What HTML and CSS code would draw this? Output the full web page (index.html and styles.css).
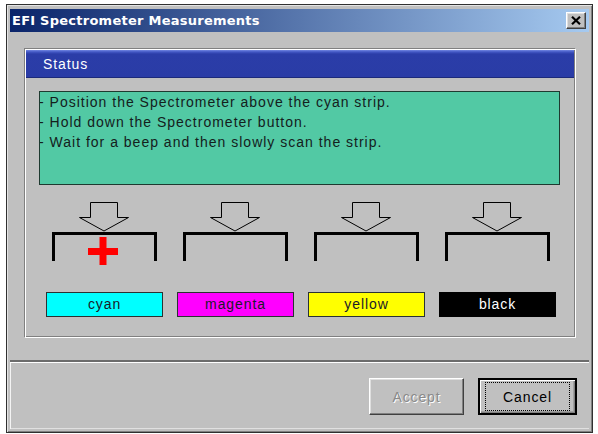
FILE: index.html
```html
<!doctype html>
<html lang="en">
  <head>
    <meta charset="utf-8">
    <title>EFI Spectrometer Measurements</title>
    <link rel="stylesheet" href="styles.css">
  </head>
  <body>
    <div class="window">
      <div class="titlebar">
        <span class="title">EFI Spectrometer Measurements</span>
        <button type="button" class="close-btn" aria-label="Close">
          <svg width="10" height="9" viewBox="0 0 10 9">
            <path d="M1 0.8 L9 8.2 M9 0.8 L1 8.2" stroke="#000" stroke-width="2.2" fill="none"/>
          </svg>
        </button>
      </div>

      <div class="client">
        <div class="panel">
          <div class="panel-head">Status</div>

          <div class="status-box">
            <div class="status-text">
              <div>- Position the Spectrometer above the cyan strip.</div>
              <div>- Hold down the Spectrometer button.</div>
              <div>- Wait for a beep and then slowly scan the strip.</div>
            </div>
          </div>

          <div class="strips">
            <div class="strip">
              <svg class="target" width="131" height="64" viewBox="0 0 131 64">
                <polygon points="51.5,0.5 78.5,0.5 78.5,15.5 89.5,15.5 65,29 40.5,15.5 51.5,15.5" fill="none" stroke="#000" stroke-width="1"/>
                <polyline points="14.5,59 14.5,31.5 116.5,31.5 116.5,59" fill="none" stroke="#000" stroke-width="3" stroke-linejoin="miter"/>
                <rect x="49" y="46" width="30" height="7" fill="#f00"/>
                <rect x="60.5" y="35" width="7" height="28" fill="#f00"/>
              </svg>
              <div class="swatch swatch-cyan">cyan</div>
            </div>
            <div class="strip">
              <svg class="target" width="131" height="64" viewBox="0 0 131 64">
                <polygon points="51.5,0.5 78.5,0.5 78.5,15.5 89.5,15.5 65,29 40.5,15.5 51.5,15.5" fill="none" stroke="#000" stroke-width="1"/>
                <polyline points="14.5,59 14.5,31.5 116.5,31.5 116.5,59" fill="none" stroke="#000" stroke-width="3" stroke-linejoin="miter"/>
              </svg>
              <div class="swatch swatch-magenta">magenta</div>
            </div>
            <div class="strip">
              <svg class="target" width="131" height="64" viewBox="0 0 131 64">
                <polygon points="51.5,0.5 78.5,0.5 78.5,15.5 89.5,15.5 65,29 40.5,15.5 51.5,15.5" fill="none" stroke="#000" stroke-width="1"/>
                <polyline points="14.5,59 14.5,31.5 116.5,31.5 116.5,59" fill="none" stroke="#000" stroke-width="3" stroke-linejoin="miter"/>
              </svg>
              <div class="swatch swatch-yellow">yellow</div>
            </div>
            <div class="strip">
              <svg class="target" width="131" height="64" viewBox="0 0 131 64">
                <polygon points="51.5,0.5 78.5,0.5 78.5,15.5 89.5,15.5 65,29 40.5,15.5 51.5,15.5" fill="none" stroke="#000" stroke-width="1"/>
                <polyline points="14.5,59 14.5,31.5 116.5,31.5 116.5,59" fill="none" stroke="#000" stroke-width="3" stroke-linejoin="miter"/>
              </svg>
              <div class="swatch swatch-black">black</div>
            </div>
          </div>
        </div>

        <div class="separator"></div>

        <div class="button-bar">
          <button type="button" class="btn" disabled>Accept</button>
          <button type="button" class="btn btn-default"><span class="focus">Cancel</span></button>
        </div>
      </div>
    </div>
  </body>
</html>
```

FILE: styles.css
```css
body {
     margin: 0;
     background-color: #fff;
     font-family: "Liberation Sans", Arial, sans-serif;
}
.window {
     box-sizing: border-box;
     width: 587px;
     height: 429px;
     margin: 4px 0 0 6px;
     padding: 4px 3px 3px 3px;
     border: 1px solid #303030;
     background-color: #c0c0c0;
     box-shadow: inset 1px 1px #e4e4e4, inset -1px -1px #808080;
     display: flex;
     flex-direction: column;
}
.titlebar {
     height: 23px;
     flex: none;
     display: flex;
     align-items: center;
     justify-content: space-between;
     padding: 0 3px 0 2px;
     background: linear-gradient(to right, #0a246a, #a6caf0);
}
.title {
     color: #fff;
     font-family: "DejaVu Sans", sans-serif;
     font-weight: bold;
     font-size: 13px;
     letter-spacing: 0.25px;
}
.close-btn {
     width: 20px;
     height: 17px;
     padding: 0;
     display: flex;
     align-items: center;
     justify-content: center;
     background-color: #c0c0c0;
     border: 1px solid;
     border-color: #fff #404040 #404040 #fff;
     box-shadow: inset -1px -1px #808080, inset 1px 1px #dfdfdf;
}
.client {
     flex: 1;
     display: flex;
     flex-direction: column;
}
.panel {
     box-sizing: border-box;
     width: 552px;
     height: 290px;
     margin: 16px 0 0 14px;
     border: 1px solid;
     border-color: #808080 #fff #fff #808080;
     box-shadow: inset 1px 1px #fff, inset -1px -1px #808080;
     padding: 1px;
}
.panel-head {
     height: 28px;
     box-sizing: border-box;
     padding: 1px 0 0 17px;
     line-height: 27px;
     font-size: 14px;
     letter-spacing: 0.9px;
     color: #fff;
     background: linear-gradient(to bottom, #7186e2 0px, #4257c4 2px, #2b3da8 4px, #2a3ca6 100%);
     border-bottom: 1px solid #1c2a7a;
}
.status-box {
     box-sizing: border-box;
     width: 521px;
     height: 94px;
     margin: 13px 0 0 13px;
     border: 1px solid #1e3a30;
     background-color: #52c9a4;
     overflow: hidden;
}
.status-text {
     margin: 0 0 0 -1px;
     font-size: 14px;
     letter-spacing: 1px;
     line-height: 20px;
     color: #14201c;
}
.strips {
     display: grid;
     grid-template-columns: repeat(4, 131px);
     margin: 17px 0 0 13px;
}
.strip {
     display: flex;
     flex-direction: column;
     align-items: center;
}
.target {
     display: block;
}
.swatch {
     box-sizing: border-box;
     width: 117px;
     height: 25px;
     margin-top: 26px;
     border: 1px solid #2a3232;
     text-align: center;
     line-height: 23px;
     font-size: 14px;
     letter-spacing: 0.9px;
     color: #1a1a2a;
}
.swatch-cyan {
     background-color: #00ffff;
}
.swatch-magenta {
     background-color: #ff00ff;
}
.swatch-yellow {
     background-color: #ffff00;
}
.swatch-black {
     background-color: #000;
     border-color: #000;
     color: #fff;
}
.separator {
     height: 2px;
     margin-top: 22px;
     background-color: #6c6c6c;
     border-bottom: 1px solid #fff;
}
.button-bar {
     flex: 1;
     display: flex;
     justify-content: flex-end;
     align-items: flex-start;
     gap: 14px;
     padding: 15px 12px 0 0;
     box-shadow: inset 1px 0 #f4f4f4, inset 0 -1px #e0e0e0;
}
.btn {
     box-sizing: border-box;
     width: 95px;
     height: 37px;
     padding: 0;
     font-family: "Liberation Sans", Arial, sans-serif;
     font-size: 14px;
     letter-spacing: 0.9px;
     color: #000;
     background-color: #c0c0c0;
     border: 1px solid;
     border-color: #fff #404040 #404040 #fff;
     box-shadow: inset -1px -1px #808080, inset 1px 1px #dfdfdf;
}
.btn:disabled {
     color: #8a8a8a;
     text-shadow: 1px 1px #fff;
}
.btn-default {
     width: 99px;
     display: flex;
     padding: 2px 5px 2px 5px;
     border: 2px solid;
     border-color: #000;
     box-shadow: inset 1px 1px #fff, inset -1px -1px #808080, inset -2px -2px #a0a0a0;
}
.focus {
     flex: 1;
     display: flex;
     align-items: center;
     justify-content: center;
     border: 1px dotted #000;
     padding-top: 1px;
}
```
